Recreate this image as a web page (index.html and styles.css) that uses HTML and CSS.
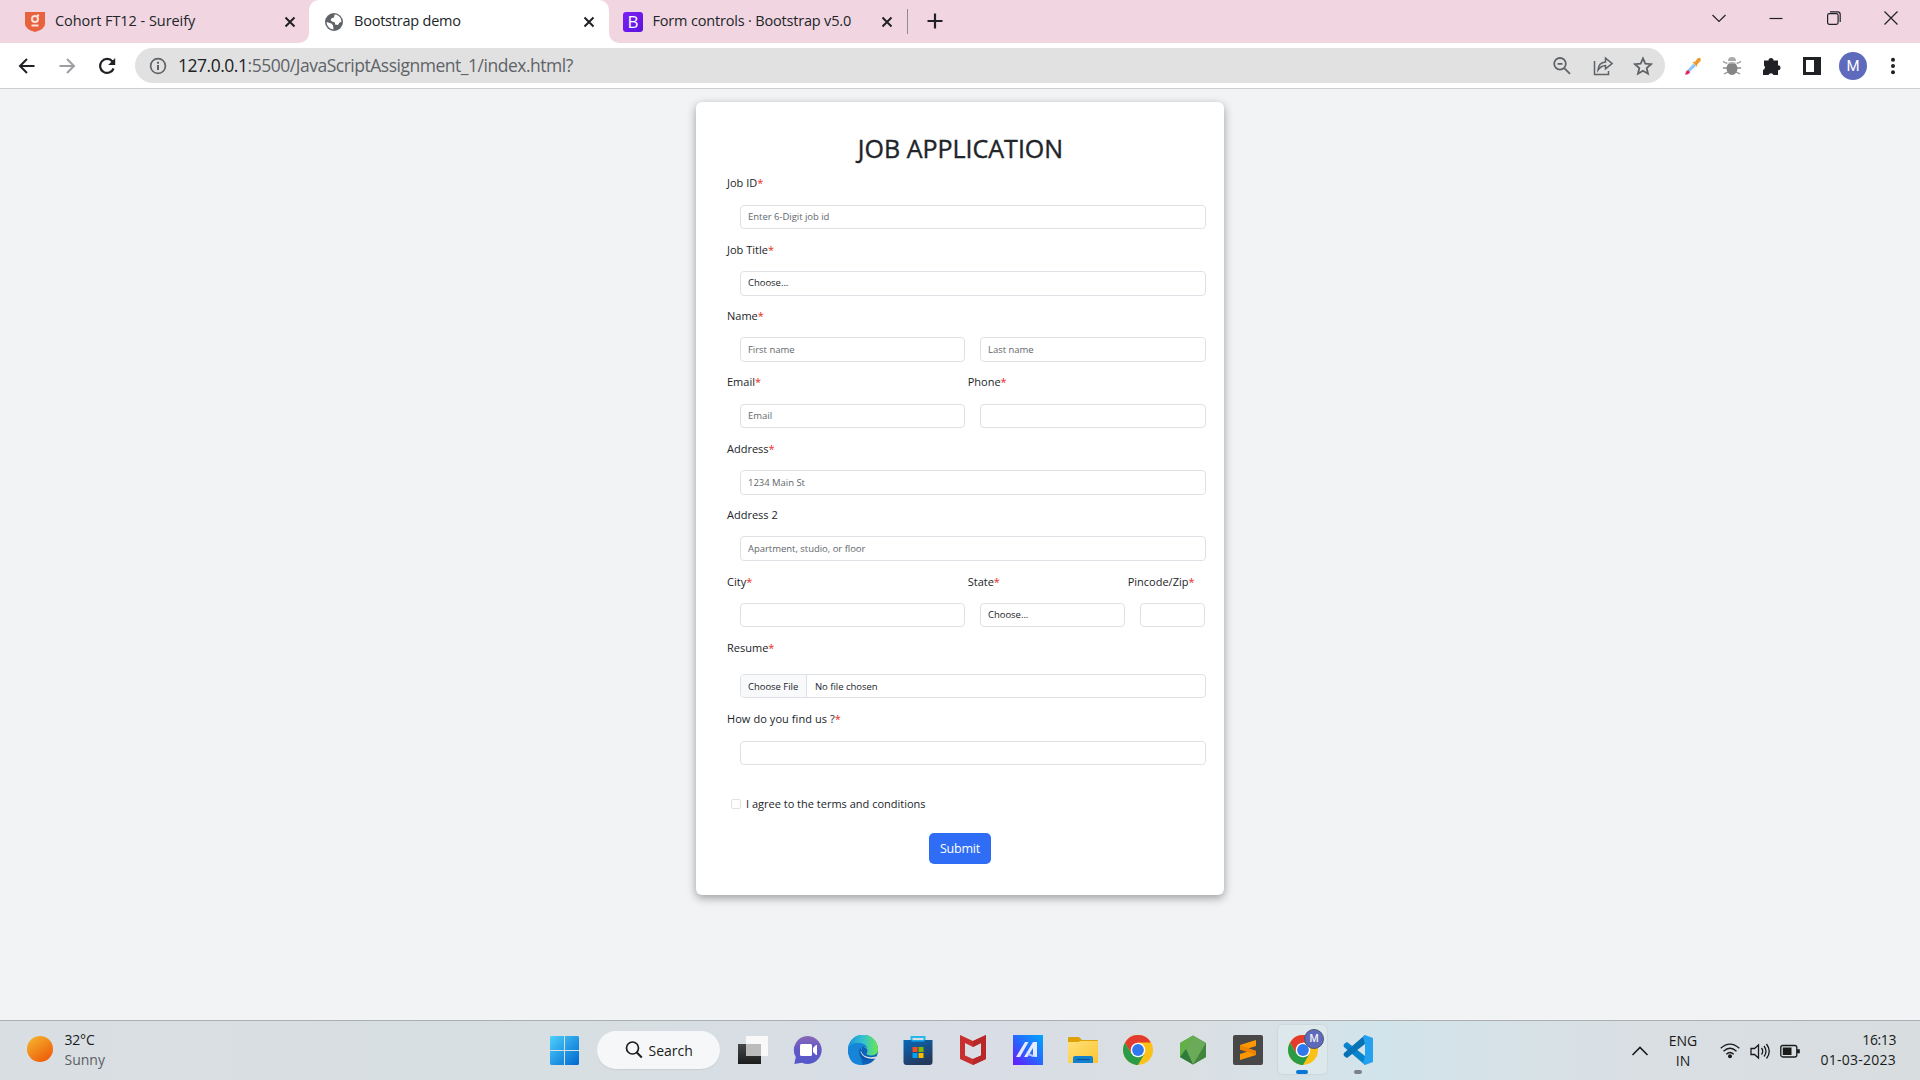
FILE: index.html
```html
<!DOCTYPE html>
<html lang="en">
<head>
<meta charset="utf-8">
<title>Bootstrap demo</title>
<link rel="stylesheet" href="styles.css">
</head>
<body>
<header class="tabs">
  <div class="tab tab-first">
    <svg class="fav" width="20" height="20" viewBox="0 0 20 20"><path d="M0 0h20v12q0 5-10 8Q0 17 0 12z" fill="#e8623d"/><circle cx="10" cy="7" r="3" fill="none" stroke="#fbe0dc" stroke-width="2"/><path d="M12 4l2-1M6.500 13.500h7" stroke="#fbe0dc" stroke-width="2"/></svg>
    <span class="tab-title">Cohort FT12 - Sureify</span>
    <svg class="close" width="12" height="12" viewBox="0 0 12 12"><path d="M1.500 1.500l9 9m0-9l-9 9"/></svg>
  </div>
  <div class="tab tab-active">
    <svg class="fav" width="20" height="20" viewBox="0 0 20 20"><circle cx="10" cy="10" r="9" fill="#5f6368"/><path d="M10.500 2.500q4.500 0 6.500 4.500l.5 3-2 .5-1.500 2.500-3-.5v-2L8 9.500 6.500 8 8 6l2-.5zM2.500 10l5 1.500 1.500 2 .5 4Q3 16.500 2.500 10z" fill="#fff"/></svg>
    <span class="tab-title title-mid">Bootstrap demo</span>
    <svg class="close" width="12" height="12" viewBox="0 0 12 12"><path d="M1.500 1.500l9 9m0-9l-9 9"/></svg>
  </div>
  <div class="tab tab-last">
    <span class="bs-icon">B</span>
    <span class="tab-title title-wide">Form controls · Bootstrap v5.0</span>
    <svg class="close" width="12" height="12" viewBox="0 0 12 12"><path d="M1.500 1.500l9 9m0-9l-9 9"/></svg>
  </div>
  <svg class="new-tab" width="16" height="16" viewBox="0 0 16 16"><path d="M8 .5v15M.5 8h15" stroke="#202124" stroke-width="2.200"/></svg>
  <div class="win-buttons">
    <svg width="14" height="14" viewBox="0 0 14 14"><path d="M.5 4L7 10.500 13.500 4"/></svg>
    <svg width="14" height="14" viewBox="0 0 14 14"><path d="M.5 7.500h13"/></svg>
    <svg width="14" height="14" viewBox="0 0 14 14"><rect x=".6" y="2.600" width="10.500" height="10.800" rx="1.800"/><path d="M3 .8h7.500q2.700 0 2.700 2.700V11"/></svg>
    <svg width="14" height="14" viewBox="0 0 14 14"><path d="M.5.5l13 13m0-13l-13 13"/></svg>
  </div>
</header>
<nav class="toolbar">
  <div class="nav-buttons">
    <svg width="18" height="18" viewBox="0 0 18 18"><path d="M16.500 9H2.500M9 2L2 9l7 7" fill="none" stroke="#202124" stroke-width="2"/></svg>
    <svg width="18" height="18" viewBox="0 0 18 18"><path d="M1.500 9h14M9 2l7 7-7 7" fill="none" stroke="#9c9ea1" stroke-width="2"/></svg>
    <svg width="18" height="18" viewBox="0 0 18 18"><path d="M15.600 11.500A7 7 0 1 1 14.500 4.500" fill="none" stroke="#202124" stroke-width="2.200"/><path d="M17.200 1v7h-7z" fill="#202124"/></svg>
  </div>
  <div class="omnibox">
    <svg width="18" height="18" viewBox="0 0 18 18"><circle cx="9" cy="9" r="7.400" fill="none" stroke="#5f6368" stroke-width="1.700"/><path d="M9 8v5M9 4.800v1.900" stroke="#5f6368" stroke-width="2"/></svg>
    <span class="url"><b>127.0.0.1</b>:5500/JavaScriptAssignment_1/index.html?</span>
    <div class="omni-actions">
      <svg width="20" height="20" viewBox="0 0 20 20"><circle cx="8" cy="7.800" r="5.800"/><path d="M12.500 12.300l5.500 5.500M5.500 7.800h5"/></svg>
      <svg width="20" height="20" viewBox="0 0 20 20"><path d="M1.500 5v13.500h14V15M5 14q.5-7.500 7.500-8V2.200l6.500 5.300-6.500 5.300V9.500Q8 9.700 5 14z" stroke-width="1.500"/></svg>
      <svg width="20" height="20" viewBox="0 0 20 20"><path d="M10 2.400l2.300 5.300 5.700.5-4.300 3.800 1.300 5.700-5-3-5 3L6.300 12 2 8.200l5.700-.5z"/></svg>
    </div>
  </div>
  <div class="extensions">
    <svg width="20" height="20" viewBox="0 0 20 20"><path d="M3.500 15l7-7.500 2.500 2.500-7.500 7z" fill="#8fc7fb"/><path d="M2 18.500l1.500-3.700 2.500-.3 1 2.300-2.500 1.700z" fill="#e8265f"/><path d="M9.500 6l2.500-.3L14.500 2.500q2-1.500 3 0t-.5 3L14.300 8.500 14 11z" fill="#ee982d"/></svg>
    <svg width="20" height="20" viewBox="0 0 20 20"><path d="M1 5.500l4 2M1 12h4M2 18l4-2M19 5.500l-4 2M19 12h-4M18 18l-4-2" stroke="#8c8c8c" stroke-width="1.300"/><path d="M6 5q0-4 4-4t4 4z" fill="#aaa"/><ellipse cx="10" cy="12.500" rx="5.500" ry="6.500" fill="#858585"/><path d="M5 7h10" stroke="#ccc"/></svg>
    <svg width="20" height="20" viewBox="0 0 20 20"><path d="M2 4.500h4.500a2.500 2.500 0 1 1 5 0H16v4.700a2.500 2.500 0 1 1 0 5V19h-4.500a2.700 2.700 0 0 0-5 0H1v-5a2.600 2.600 0 0 0 1-4.500z" fill="#202124"/></svg>
    <svg width="20" height="20" viewBox="0 0 20 20"><path d="M1 1h18v18H1zM4 4v12h8V4z" fill="#202124" fill-rule="evenodd"/></svg>
    <span class="avatar">M</span>
    <svg width="20" height="20" viewBox="0 0 20 20" fill="#202124"><circle cx="9" cy="3.700" r="2"/><circle cx="9" cy="10" r="2"/><circle cx="9" cy="16.200" r="2"/></svg>
  </div>
</nav>
<main class="page">
  <form class="card">
    <h1>JOB APPLICATION</h1>
    <div class="group"><label>Job ID<i>*</i></label><input class="control" placeholder="Enter 6-Digit job id"></div>
    <div class="group"><label>Job Title<i>*</i></label><select class="control"><option>Choose...</option></select></div>
    <div class="row halves">
      <div class="group"><label>Name<i>*</i></label><input class="control" placeholder="First name"></div>
      <div class="group"><label>&nbsp;</label><input class="control" placeholder="Last name"></div>
    </div>
    <div class="row halves">
      <div class="group"><label>Email<i>*</i></label><input class="control" placeholder="Email"></div>
      <div class="group"><label>Phone<i>*</i></label><input class="control"></div>
    </div>
    <div class="group"><label>Address<i>*</i></label><input class="control" placeholder="1234 Main St"></div>
    <div class="group"><label>Address 2</label><input class="control" placeholder="Apartment, studio, or floor"></div>
    <div class="row thirds">
      <div class="group"><label>City<i>*</i></label><input class="control"></div>
      <div class="group"><label>State<i>*</i></label><select class="control"><option>Choose...</option></select></div>
      <div class="group"><label>Pincode/Zip<i>*</i></label><input class="control"></div>
    </div>
    <div class="group group-file"><label>Resume<i>*</i></label>
      <div class="control file"><span class="file-button">Choose File</span><span class="file-name">No file chosen</span></div>
    </div>
    <div class="group"><label class="loose">How do you find us ?<i>*</i></label><input class="control"></div>
    <div class="agree"><span class="box"></span><span class="agree-text">I agree to the terms and conditions</span></div>
    <button class="submit" type="button">Submit</button>
  </form>
</main>
<footer class="taskbar">
  <div class="weather"><span class="sun"></span><div><div class="temp">32°C</div><div class="sky">Sunny</div></div></div>
  <div class="apps">
    <svg class="start" width="29" height="29" viewBox="0 0 29 29"><defs><linearGradient id="win" gradientUnits="userSpaceOnUse" x1="0" y1="0" x2="29" y2="29"><stop stop-color="#4cd0fb"/><stop offset="1" stop-color="#0067cf"/></linearGradient></defs><path d="M1 0h13v14H0V1zM15 0h13l1 1v13H15zM0 15h14v14H1l-1-1zM15 15h14v13l-1 1H15z" fill="url(#win)"/></svg>
    <div class="search"><svg width="18" height="18" viewBox="0 0 18 18"><circle cx="7.500" cy="7" r="6" fill="none" stroke="#1d1d1d" stroke-width="1.700"/><path d="M11.800 11.500l5 5" stroke="#1d1d1d" stroke-width="2"/></svg><span>Search</span></div>
    <div class="app"><svg width="30" height="30" viewBox="0 0 30 30"><defs><linearGradient id="tv" x2="0" y2="1"><stop stop-color="#484848"/><stop offset="1" stop-color="#1c1c1c"/></linearGradient></defs><path d="M0 9h23v20H0z" fill="url(#tv)"/><path d="M8 1h22v20H8z" fill="#f8f8f8"/><path d="M8 9h15v12H8z" fill="#bcbcbc"/></svg></div>
    <div class="app"><svg width="30" height="30" viewBox="0 0 30 30"><defs><linearGradient id="chat" x2="0" y2="1"><stop stop-color="#8a67b4"/><stop offset=".5" stop-color="#6059c8"/><stop offset="1" stop-color="#5458c8"/></linearGradient></defs><path d="M15 1a14 14 0 1 1-6 26.800L1.300 29l1.500-7A14 14 0 0 1 15 1z" fill="url(#chat)"/><rect x="7" y="9" width="12" height="12" rx="1.500" fill="#fff"/><path d="M20 13l3-3h1v10h-1l-3-3z" fill="#fff"/></svg></div>
    <div class="app"><svg width="30" height="30" viewBox="0 0 30 30"><defs><linearGradient id="edge" x2="1"><stop stop-color="#1b94dc"/><stop offset=".5" stop-color="#34c1d0"/><stop offset="1" stop-color="#66e84f"/></linearGradient></defs><circle cx="15" cy="15" r="15" fill="#0c62b9"/><path d="M0 15A15 15 0 0 1 30 14q0 6-6 6.500-5 0-5.500-2 2-3 0-5Q10 7 0 15z" fill="url(#edge)"/><path d="M0 16q1-8 9-8 8-.5 10.500 5-5-2.500-7.500 1-1.500 3 0 7l3 8.800Q1 31 0 16z" fill="#1785d7"/><path d="M17 12q-3-1-4.500 2-2 8 8.500 10 4 .3 7-2l-.7 1.500Q24 26 19 25q-8-2-7.500-9.500Q13 11 17 12z" fill="#0a4fa3"/><path d="M14 12q-3 4 2 8.500 5 3 12 1l2 1v4h-2l-.5-3q-2 .5-5 .3Q15 23 12.500 17z" fill="#dbe0e6"/></svg></div>
    <div class="app"><svg width="30" height="30" viewBox="0 0 30 30"><defs><linearGradient id="store" x2=".5" y2="1"><stop stop-color="#0869b8"/><stop offset="1" stop-color="#25395e"/></linearGradient></defs><path d="M8.500 8V2h13v6" fill="none" stroke="#26b7ec" stroke-width="2"/><path d="M.5 5h29v22q0 3-3 3h-23q-3 0-3-3z" fill="url(#store)"/><path d="M8.500 5.800h13" stroke="#1aa4e8" stroke-width="1.600"/><path d="M9.500 12h5v5h-5z" fill="#f25022"/><path d="M15.500 12h5v5h-5z" fill="#7fba00"/><path d="M9.500 18h5v5h-5z" fill="#00a4ef"/><path d="M15.500 18h5v5h-5z" fill="#ffb900"/></svg></div>
    <div class="app"><svg width="30" height="30" viewBox="0 0 30 30"><path d="M2 0l13 6 13-6v24l-13 6-13-6z" fill="#c82f30"/><path d="M7 8l8 4 8-4v12.500L15 24l-8-3.500z" fill="#d8dee4"/><path d="M15 6l13-6v24l-13 6v-6l8-3.500V8l-8 4z" fill="#b82829"/></svg></div>
    <div class="app"><svg width="30" height="30" viewBox="0 0 30 30"><defs><linearGradient id="asus" x1="0" y1="1" x2="1" y2="0"><stop stop-color="#6a16ff"/><stop offset=".5" stop-color="#2668ff"/><stop offset="1" stop-color="#00a7ff"/></linearGradient></defs><path d="M0 0h30v30H0z" fill="url(#asus)"/><path d="M3 22L12 7h3.500L7 22zM11 22l9-15h4v15h-4V13l-5.500 9z" fill="#e4eaff"/><path d="M16 18l8 4h-4l-5.500-2z" fill="#b7c8ff"/></svg></div>
    <div class="app"><svg width="30" height="30" viewBox="0 0 30 30"><defs><linearGradient id="dir" x2="1" y2="1"><stop stop-color="#ffe07a"/><stop offset="1" stop-color="#fbc52f"/></linearGradient></defs><path d="M0 3q0-1 1-1h10l3 3h15q1 0 1 1v6H0z" fill="#dfa10a"/><path d="M0 7h10l3-1h17v22H0z" fill="url(#dir)"/><path d="M5 28v-5q0-2 2-2h16q2 0 2 2v5z" fill="#1480d0"/><path d="M8.500 24.500h13" stroke="#07569a" stroke-width="1.300"/></svg></div>
    <div class="app"><svg width="30" height="30" viewBox="0 0 30 30"><g id="chrome"><circle cx="15" cy="15" r="15" fill="#fbc116"/><path d="M2 7.500A15 15 0 0 1 28 7.500H15L8.500 18.700z" fill="#e33b2e"/><path d="M2 7.500l6.500 11.200L15 22.500l-2.800 7.200A15 15 0 0 1 2 7.500z" fill="#2a9c48"/><path d="M8.500 18.700L15 22.500l6.500-3.800L15 30a15 15 0 0 1-2.800-.3z" fill="#2a9c48"/><circle cx="15" cy="15" r="7.300" fill="#fff"/><circle cx="15" cy="15" r="5.900" fill="#3078ee"/></g></svg></div>
    <div class="app"><svg width="30" height="30" viewBox="0 0 30 30"><path d="M15 .5l13 7.500v14l-13 7.500L2 22V8z" fill="#559b46"/><path d="M15 .5L2 8v14l6-8z" fill="#62b147"/><path d="M15 .5L28 8l-13 21.500L8 14z" fill="#6aaa58"/><path d="M28 8v14l-13 7.500z" fill="#43853f"/><path d="M2 22l6-8 7 15.500z" fill="#2f7b3a"/></svg></div>
    <div class="app"><svg width="30" height="30" viewBox="0 0 30 30"><rect width="30" height="30" rx="2" fill="#484848"/><path d="M7 10l16-5v6l-8 2.500 8 2.500v4L7 25v-6l8-2.500-8-2z" fill="#ff9800"/><path d="M7 10v4.500l16 5.500v-4z" fill="#ee8300"/></svg></div>
    <div class="app current"><svg width="30" height="30" viewBox="0 0 30 30"><use href="#chrome"/></svg><span class="badge">M</span><span class="mark"></span></div>
    <div class="app"><svg width="30" height="30" viewBox="0 0 30 30"><path d="M1 9l3-2 18 14v9L1 12q-1-1.500 0-3z" fill="#0784cc"/><path d="M1 21l3 2L22 9V0L1 18q-1 1.500 0 3z" fill="#0872b7"/><path d="M22 0l8 3v24l-8 3-2-2 2-7V9l-2-7z" fill="#25a2ef"/></svg><span class="mark idle"></span></div>
  </div>
  <div class="tray">
    <svg class="up" width="18" height="18" viewBox="0 0 18 18"><path d="M1.500 13L9 5.500l7.500 7.500"/></svg>
    <div class="lang">ENG<br>IN</div>
    <svg width="20" height="20" viewBox="0 0 20 20"><path d="M.7 7.300Q10-1 19.300 7.300M3.500 10.300q6.500-6 13 0M6.300 13.300q3.700-3.500 7.400 0"/><circle cx="10" cy="15.300" r="2" fill="#1b1b1b" stroke="none"/></svg>
    <svg width="20" height="20" viewBox="0 0 20 20"><path d="M1 7.500h3.500L8.500 4v13l-4-3.500H1zM11.500 7q2.500 3.200 0 6.500M14 5q4 5.300 0 10.500M16.500 3q5.500 7.300 0 14.500"/></svg>
    <svg width="20" height="20" viewBox="0 0 20 20"><rect x=".8" y="4.500" width="16" height="11.500" rx="2"/><path d="M2.800 6.500h8.700v7.500H2.800zM17 8.200h2.800v4H17z" fill="#1b1b1b" stroke="none"/></svg>
    <div class="clock"><span class="time">16:13</span><span class="date">01-03-2023</span></div>
  </div>
</footer>
</body>
</html>
```
FILE: styles.css
```css
* { box-sizing: border-box; }
body {
  margin: 0;
  width: 1920px;
  height: 1080px;
  overflow: hidden;
  display: flex;
  flex-direction: column;
  font-family: "Open Sans", "Noto Sans", sans-serif;
  color: #212529;
  background: #f1f3f5;
}
svg { display: block; flex: none; }

/* Tab strip */
.tabs { height: 43px; flex: none; display: flex; background: linear-gradient(#f1d6e2 0 20px, #fff 20px); }
.tab { height: 43px; display: flex; align-items: center; background: #f1d6e2; white-space: nowrap; }
.tab-first { width: 309px; padding: 0 13px 0 25px; border-radius: 0 0 10px 0; }
.tab-active { width: 300px; padding: 0 14px 0 15px; background: #fff; border-radius: 10px 10px 0 0; }
.tab-last { width: 298px; padding: 0 14px; border-radius: 0 0 0 10px; }
.tab-title { flex: 1; font-size: 14.500px; line-height: 20px; margin: -2px 0 0 10px; letter-spacing: -0.05px; }
.tab-title.title-mid { letter-spacing: -0.22px; }
.tab-title.title-wide { letter-spacing: -0.18px; margin-left: 9.500px; }
.close { fill: none; stroke: #202124; stroke-width: 2; }
.bs-icon { width: 20px; height: 20px; border-radius: 3px; background: linear-gradient(135deg, #7b22f3, #5b12e0); color: #fff; font: 500 17px/20px "Open Sans", sans-serif; text-align: center; }
.new-tab { width: 56px; height: 43px; padding: 13px 20px 14px 20px; background: linear-gradient(#918a8e, #918a8e) 0 9px / 1px 25px no-repeat #f1d6e2; }
.win-buttons { flex: 1; display: flex; justify-content: flex-end; gap: 43.300px; padding: 11px 22px 0 0; background: #f1d6e2; }
.win-buttons svg { fill: none; stroke: #202124; stroke-width: 1.200; }

/* Address row */
.toolbar { height: 46px; flex: none; display: flex; align-items: center; background: #fff; border-bottom: 1px solid #ccced0; }
.nav-buttons { width: 135px; display: flex; gap: 22px; padding-left: 18px; }
.omnibox { width: 1530px; height: 35px; display: flex; align-items: center; padding: 0 12px 0 13.500px; border-radius: 18px; background: #e1e1e1; }
.url { margin: -1px 0 0 11.500px; flex: 1; font-size: 17.500px; line-height: 24px; letter-spacing: -0.480px; color: #5f6368; }
.url b { font-weight: 400; color: #202124; }
.omni-actions { display: flex; gap: 20.500px; }
.omni-actions svg { fill: none; stroke: #5f6368; stroke-width: 1.800; }
.extensions { display: flex; align-items: center; padding-left: 17.500px; gap: 19.900px; }
.avatar { width: 28px; height: 28px; margin: 0 -3px; border-radius: 50%; background: #5e6abb; color: #fff; font: 400 15px/28px Roboto, sans-serif; text-align: center; }

/* Form */
.page { height: 931px; flex: none; padding: 13px 0 0 696px; }
.card { width: 528px; height: 793px; padding: 31px 18px 0 31px; background: #fff; border-radius: 6px; box-shadow: 0 3px 10px rgba(0,0,0,.36); }
h1 { margin: 0 0 12.400px; padding-right: 12px; font-size: 25px; font-weight: 500; line-height: 30px; text-align: center; -webkit-text-stroke: .4px #212529; }
.group { height: 66.370px; display: flex; flex-direction: column; }
.group label { height: 16px; font-size: 11px; font-weight: 500; line-height: 16px; white-space: nowrap; }
.group label.loose { letter-spacing: .07px; }
.group i { font-style: normal; color: #ea2b20; }
.control { appearance: none; height: 24.500px; margin: 13.300px 0 0 13px; min-width: 0; padding: 0 7px .2px; border: 1px solid #dee2e6; border-radius: 4px; background: #fff; color: #212529; font: 400 9.500px/20px "Open Sans", sans-serif; letter-spacing: -0.03px; }
.control::placeholder { color: #62676c; opacity: 1; }
.row { display: grid; column-gap: 2px; }
.row .group:not(:first-child) label { padding-left: .7px; }
.halves { grid-template-columns: 238px 239px; }
.thirds { grid-template-columns: 238px 158px 78px; }
.group-file { height: 71.400px; }
.file { display: flex; padding: 0; margin-top: 18px; overflow: hidden; line-height: 23px; }
.file-button { width: 66px; padding-left: 7px; background: #f8f9fa; border-right: 1px solid #dee2e6; }
.file-name { padding-left: 8px; }
.agree { height: 16px; display: flex; align-items: center; margin: 18.400px 0 0 4px; font-size: 11px; font-weight: 500; }
.box { width: 10px; height: 10px; border: 1px solid #dee2e6; border-radius: 2px; }
.agree-text { margin-left: 5px; line-height: 16px; white-space: nowrap; }
.submit { display: block; width: 62px; height: 31px; margin: 21px 0 0 202px; padding: 0; border: 0; border-radius: 5px; background: #2f6df6; color: #fff; font: 500 12.500px/31px "Open Sans", sans-serif; letter-spacing: -0.2px; }

/* Taskbar */
.taskbar { height: 60px; display: flex; border-top: 1px solid #adb0b3; background: linear-gradient(90deg, #d9dee2, #d7dfe2 30%, #d8dde6 50%, #dadfe3 62%, #d2e4eb 72%, #d9dfe3 85%, #d8dde0); color: #1b1b1b; }
.weather { width: 550px; display: flex; padding: 9px 0 0 27px; font-size: 14px; line-height: 20px; }
.sun { width: 26px; height: 26px; margin: 6px 11.500px 0 0; border-radius: 50%; background: linear-gradient(145deg, #f3ba32, #f0650b 80%); }
.temp { letter-spacing: -0.2px; }
.sky { color: #5c6063; }
.apps { width: 1074px; display: flex; }
.start { margin: 15px 18px 0 0; }
.search { width: 123px; height: 38px; margin: 10px 5px 0 0; padding-left: 28px; display: flex; align-items: center; gap: 5.500px; border-radius: 19px; background: #f5f7f8; font-size: 14px; box-shadow: 0 1px 1px #c9ced2; }
.app { position: relative; width: 49px; height: 49px; margin: 4px 3px 0; padding: 10px 9.500px; border-radius: 5px; }
.current { background: #dde8ed; box-shadow: 0 0 1px 1px #cdd8dd; }
.badge { position: absolute; left: 26px; top: 4px; width: 20px; height: 20px; border-radius: 50%; background: #5e6abb; border: 1px solid #4c566f; color: #eee; font: 500 10.500px/18px Roboto, sans-serif; text-align: center; }
.mark { position: absolute; left: 18px; top: 45px; width: 12px; height: 4px; border-radius: 2px; background: #0878d4; }
.mark.idle { left: 21px; width: 8px; background: #7c8285; }
.tray { flex: 1; display: flex; align-items: center; font-size: 14px; line-height: 20px; }
.tray svg { fill: none; stroke: #1b1b1b; stroke-width: 1.300; margin-right: 10px; }
.tray .up { margin: 0 14px 0 7px; stroke-width: 1.600; }
.lang { width: 40px; margin-right: 17px; text-align: center; }
.clock { flex: 1; padding-right: 24px; margin-top: -2px; display: flex; flex-direction: column; align-items: flex-end; }
.time { letter-spacing: -0.4px; }
.date { letter-spacing: .25px; }
```
